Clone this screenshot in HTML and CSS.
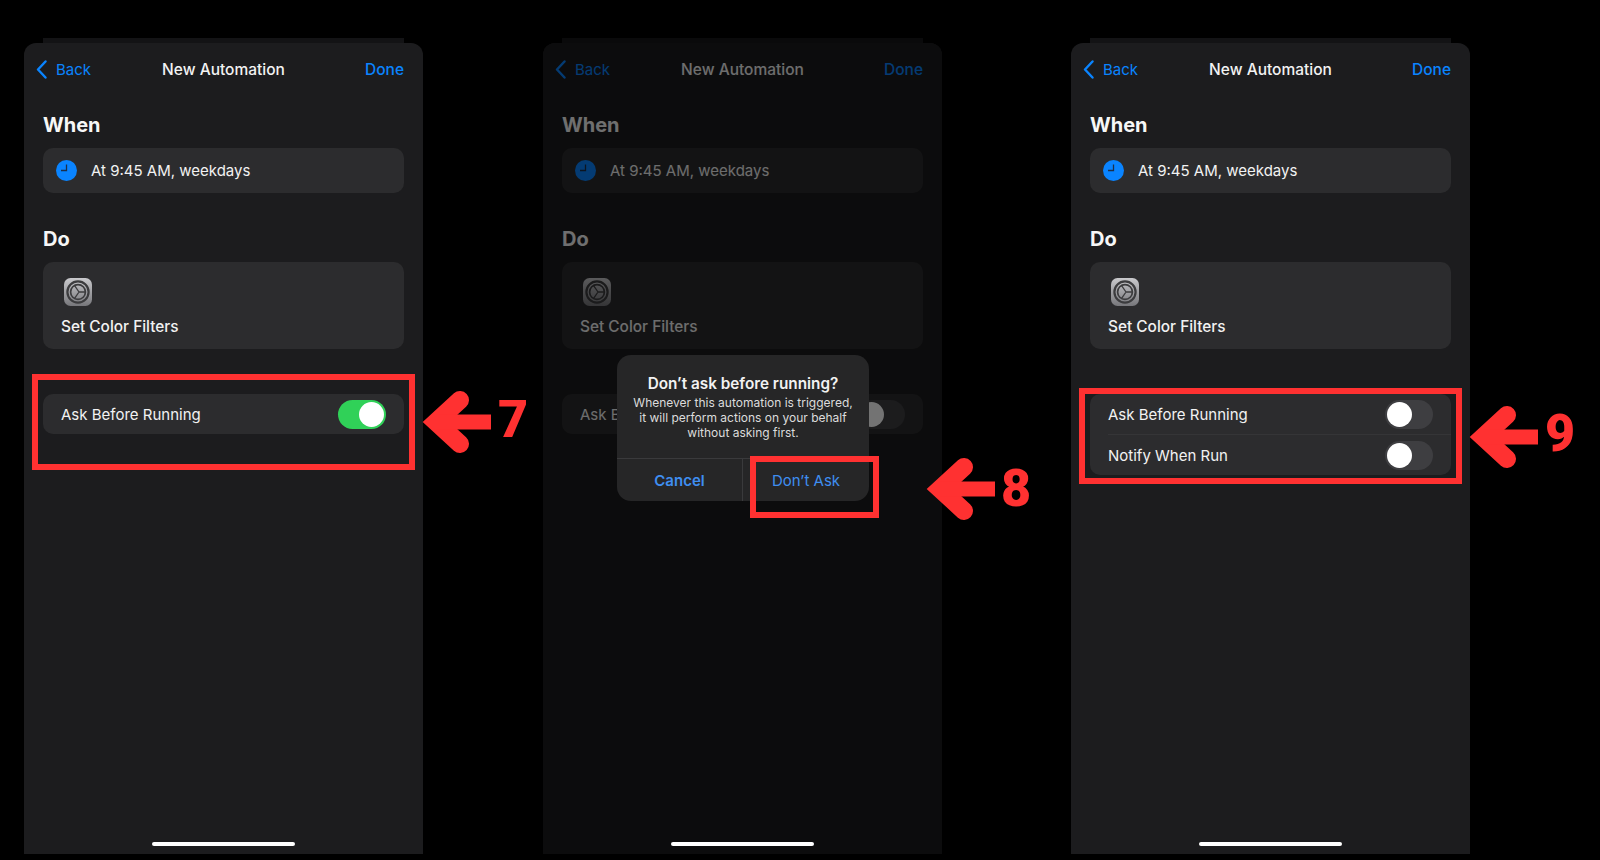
FILE: index.html
```html
<!DOCTYPE html>
<html lang="en">
<head>
    <meta charset="UTF-8">
    <meta name="viewport" content="width=device-width, initial-scale=1.0">
    <title>New Automation steps</title>
    <link rel="stylesheet" href="styles.css">
</head>
<body>
    <svg class="defs" width="0" height="0">
        <symbol id="arrow" viewBox="0 0 70 64">
            <path d="M38 10 L14 32 L38 54" fill="none" stroke="#ff3131" stroke-width="18" stroke-linecap="round" stroke-linejoin="miter"/>
            <path d="M14 32 H69" fill="none" stroke="#ff3131" stroke-width="15"/>
        </symbol>
        <symbol id="chevron" viewBox="0 0 11 19">
            <path d="M9.5 1.5 L2 9.5 L9.5 17.5" fill="none" stroke="#0a84ff" stroke-width="2.4" stroke-linecap="round" stroke-linejoin="round"/>
        </symbol>
        <symbol id="clock" viewBox="0 0 21 21">
            <circle cx="10.5" cy="10.5" r="10.5" fill="#0a84ff"/>
            <path d="M10.5 4.5 V10.5 H5" fill="none" stroke="#1c2f4a" stroke-width="1.3"/>
        </symbol>
        <symbol id="gear" viewBox="0 0 28 28">
            <defs>
                <linearGradient id="gearbg" x1="0" y1="0" x2="0" y2="1">
                    <stop offset="0" stop-color="#c9c9cc"/>
                    <stop offset="1" stop-color="#77777b"/>
                </linearGradient>
            </defs>
            <rect width="28" height="28" rx="6.5" fill="url(#gearbg)"/>
            <circle cx="14" cy="14" r="10.6" fill="none" stroke="#3c3c3e" stroke-width="2.2"/>
            <circle cx="14" cy="14" r="7.4" fill="none" stroke="#3c3c3e" stroke-width="1.7"/>
            <path d="M15 14 H21 M15 14 L10.6 7.6 M15 14 L10.6 20.4" stroke="#3c3c3e" stroke-width="1.3" fill="none"/>
        </symbol>
    </svg>

    <div class="stage">
        <!-- step 7 -->
        <section class="shot shot-a">
            <div class="strip"></div>
            <div class="phone">
                <div class="nav">
                    <span class="back"><svg class="chev"><use href="#chevron"/></svg>Back</span>
                    <span class="nav-title">New Automation</span>
                    <span class="done">Done</span>
                </div>
                <h2 class="head">When</h2>
                <div class="card when">
                    <svg class="clock"><use href="#clock"/></svg>
                    <span>At 9:45 AM, weekdays</span>
                </div>
                <h2 class="head head-do">Do</h2>
                <div class="card action">
                    <svg class="gear"><use href="#gear"/></svg>
                    <span class="action-name">Set Color Filters</span>
                </div>
                <div class="card rows">
                    <div class="row">
                        <span>Ask Before Running</span>
                        <span class="toggle on"><i></i></span>
                    </div>
                </div>
                <div class="home"></div>
            </div>
            <div class="mark mark-a"></div>
            <svg class="arrow arrow-a"><use href="#arrow"/></svg>
            <span class="num num-a">7</span>
        </section>

        <!-- step 8 -->
        <section class="shot shot-b">
            <div class="strip"></div>
            <div class="phone">
                <div class="nav">
                    <span class="back"><svg class="chev"><use href="#chevron"/></svg>Back</span>
                    <span class="nav-title">New Automation</span>
                    <span class="done">Done</span>
                </div>
                <h2 class="head">When</h2>
                <div class="card when">
                    <svg class="clock"><use href="#clock"/></svg>
                    <span>At 9:45 AM, weekdays</span>
                </div>
                <h2 class="head head-do">Do</h2>
                <div class="card action">
                    <svg class="gear"><use href="#gear"/></svg>
                    <span class="action-name">Set Color Filters</span>
                </div>
                <div class="card rows">
                    <div class="row">
                        <span>Ask Before Running</span>
                        <span class="toggle"><i></i></span>
                    </div>
                </div>
                <div class="dim"></div>
                <div class="home"></div>
            </div>
            <div class="dialog">
                <div class="dialog-text">
                    <h3>Don’t ask before running?</h3>
                    <p>Whenever this automation is triggered, it will perform actions on your behalf without asking first.</p>
                </div>
                <div class="dialog-btns">
                    <span class="btn btn-cancel">Cancel</span>
                    <span class="btn">Don’t Ask</span>
                </div>
            </div>
            <div class="mark mark-b"></div>
            <svg class="arrow arrow-b"><use href="#arrow"/></svg>
            <span class="num num-b">8</span>
        </section>

        <!-- step 9 -->
        <section class="shot shot-c">
            <div class="strip"></div>
            <div class="phone">
                <div class="nav">
                    <span class="back"><svg class="chev"><use href="#chevron"/></svg>Back</span>
                    <span class="nav-title">New Automation</span>
                    <span class="done">Done</span>
                </div>
                <h2 class="head">When</h2>
                <div class="card when">
                    <svg class="clock"><use href="#clock"/></svg>
                    <span>At 9:45 AM, weekdays</span>
                </div>
                <h2 class="head head-do">Do</h2>
                <div class="card action">
                    <svg class="gear"><use href="#gear"/></svg>
                    <span class="action-name">Set Color Filters</span>
                </div>
                <div class="card rows">
                    <div class="row">
                        <span>Ask Before Running</span>
                        <span class="toggle"><i></i></span>
                    </div>
                    <div class="row row-next">
                        <span>Notify When Run</span>
                        <span class="toggle"><i></i></span>
                    </div>
                </div>
                <div class="home"></div>
            </div>
            <div class="mark mark-c"></div>
            <svg class="arrow arrow-c"><use href="#arrow"/></svg>
            <span class="num num-c">9</span>
        </section>
    </div>
</body>
</html>
```

FILE: styles.css
```css
html, body {
    margin: 0;
    height: 860px;
    overflow: hidden;
    background: #000;
}
body {
    font-family: Inter, "Liberation Sans", sans-serif;
    color: #f2f2f2;
}
.defs {
    position: absolute;
}
.stage {
    display: flex;
    padding: 38px 0 0 24px;
}
.shot {
    position: relative;
    width: 399px;
    height: 816px;
    display: flex;
    flex-direction: column;
    align-items: center;
}
.shot-b {
    margin-left: 120px;
}
.shot-c {
    margin-left: 129px;
}
.strip {
    width: 361px;
    height: 5px;
    background: #131315;
}
.phone {
    position: relative;
    width: 100%;
    flex: 1;
    box-sizing: border-box;
    padding: 0 19px;
    display: flex;
    flex-direction: column;
    background: #1c1c1e;
    border-radius: 12px 12px 0 0;
    overflow: hidden;
}
.nav {
    height: 52px;
    display: grid;
    grid-template-columns: 1fr auto 1fr;
    align-items: center;
    font-size: 15.5px;
    font-weight: 400;
}
.back {
    display: flex;
    align-items: center;
    font-size: 15px;
    color: #0a84ff;
}
.chev {
    width: 11px;
    height: 19px;
    margin: 0 9px 0 -7px;
}
.nav-title {
    font-weight: 500;
}
.done {
    text-align: right;
    color: #0a84ff;
    font-weight: 500;
}
.head {
    margin: 17px 0 10px;
    font-size: 20px;
    line-height: 26px;
    font-weight: 700;
    color: #f7f7f7;
}
.head-do {
    margin-top: 33px;
}
.card {
    background: #2c2c2e;
    border-radius: 10px;
    font-size: 15px;
}
.when {
    height: 45px;
    display: flex;
    align-items: center;
    padding-left: 13px;
    gap: 14px;
}
.clock {
    width: 21px;
    height: 21px;
}
.action {
    height: 87px;
    box-sizing: border-box;
    display: flex;
    flex-direction: column;
    align-items: flex-start;
    padding: 16px 0 0 18px;
}
.gear {
    width: 28px;
    height: 28px;
    margin-left: 3px;
}
.action-name {
    margin-top: 11px;
    font-size: 15.4px;
    font-weight: 500;
}
.rows {
    margin-top: 45px;
}
.row {
    height: 40px;
    display: flex;
    align-items: center;
    justify-content: space-between;
    padding: 0 18px;
}
.row-next {
    height: 41px;
    margin-left: 18px;
    padding-left: 0;
    border-top: 1px solid #353537;
    box-sizing: border-box;
}
.toggle {
    width: 48px;
    height: 29px;
    padding: 2px;
    box-sizing: border-box;
    display: flex;
    border-radius: 15px;
    background: #3e3e41;
}
.toggle i {
    width: 25px;
    height: 25px;
    border-radius: 50%;
    background: #fff;
}
.toggle.on {
    background: #30d158;
    justify-content: flex-end;
}
.home {
    position: relative;
    z-index: 2;
    width: 143px;
    height: 4px;
    margin: auto auto 8px;
    border-radius: 2px;
    background: #fff;
}
.dim {
    position: absolute;
    inset: 0;
    background: rgba(0, 0, 0, 0.55);
}
.shot-b .strip {
    background: #0a0a0b;
}

/* alert over the second phone */
.dialog {
    position: absolute;
    left: 74px;
    top: 317px;
    width: 252px;
    height: 146px;
    display: flex;
    flex-direction: column;
    background: #262627;
    border-radius: 14px;
}
.dialog-text {
    flex: 1;
    padding: 19px 14px 0;
    text-align: center;
}
.dialog-text h3 {
    margin: 0;
    font-size: 15.3px;
    line-height: 20px;
    font-weight: 600;
}
.dialog-text p {
    margin: 1px 0 0;
    font-size: 12px;
    line-height: 15px;
    color: #dcdcdc;
}
.dialog-btns {
    height: 42px;
    display: grid;
    grid-template-columns: 126px 1fr;
    border-top: 1px solid #3a3a3c;
}
.btn {
    display: flex;
    align-items: center;
    justify-content: center;
    color: #3f8ef0;
    font-size: 15px;
}
.btn-cancel {
    font-weight: 600;
    border-right: 1px solid #3a3a3c;
}

/* red annotations */
.mark {
    position: absolute;
    box-sizing: border-box;
    border: 6px solid #ff3131;
}
.mark-a {
    left: 8px;
    top: 336px;
    width: 383px;
    height: 96px;
}
.mark-b {
    left: 207px;
    top: 418px;
    width: 129px;
    height: 62px;
}
.mark-c {
    left: 8px;
    top: 350px;
    width: 383px;
    height: 96px;
}
.arrow {
    position: absolute;
    width: 70px;
    height: 64px;
}
.arrow-a {
    left: 398px;
    top: 352px;
}
.arrow-b {
    left: 383px;
    top: 419px;
}
.arrow-c {
    left: 398px;
    top: 367px;
}
.num {
    position: absolute;
    font-family: Roboto, "Liberation Sans", sans-serif;
    font-size: 52px;
    line-height: 52px;
    font-weight: 900;
    color: #ff3131;
}
.num-a {
    left: 474px;
    top: 356px;
}
.num-b {
    left: 458px;
    top: 425px;
}
.num-c {
    left: 474px;
    top: 370px;
}
```
